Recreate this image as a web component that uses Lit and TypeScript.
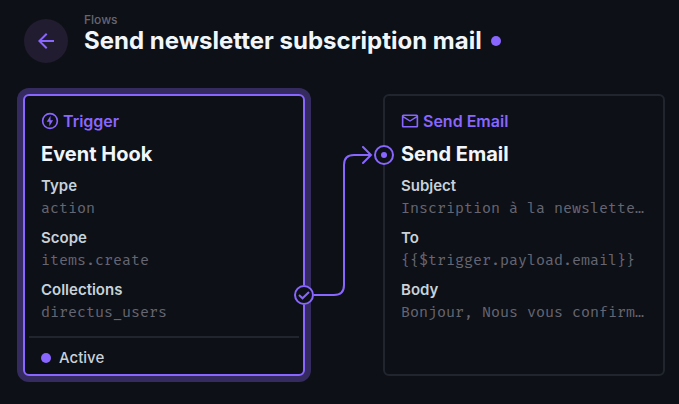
import { LitElement, html, css, svg, nothing } from "lit";
import { customElement, property } from "lit/decorators.js";
import { classMap } from "lit/directives/class-map.js";

interface Field {
  label: string;
  value: string;
}

const boltIcon = svg`
  <circle cx="12" cy="12" r="9" fill="none" stroke="currentColor" stroke-width="2" />
  <path d="M12.6 5.5 8 13h3.2v5.5L15.8 11h-3.2z" fill="currentColor" />`;

const mailIcon = svg`
  <path d="M22 6c0-1.1-.9-2-2-2H4c-1.1 0-2 .9-2 2v12c0 1.1.9 2 2 2h16c1.1 0 2-.9 2-2V6zm-2 0-8 5-8-5h16zm0 12H4V8l8 5 8-5v10z" fill="currentColor" />`;

@customElement("flow-panel")
export class FlowPanel extends LitElement {
  @property() kind = "";
  @property() name = "";
  @property({ attribute: false }) icon: unknown = nothing;
  @property({ attribute: false }) fields: Field[] = [];
  @property() status = "";
  @property({ type: Boolean }) trigger = false;

  static styles = css`
    :host {
      display: block;
      min-width: 0;
    }
    .panel {
      position: relative;
      box-sizing: border-box;
      height: 100%;
      min-height: 282px;
      display: flex;
      flex-direction: column;
      border: 2px solid #21262e;
      border-radius: 6px;
      background: #0d1017;
    }
    .selected {
      border-color: #8866ff;
      box-shadow: 0 0 0 6px #362b61;
    }
    .body {
      padding: 13px 16px 12px;
    }
    .kind {
      display: flex;
      align-items: center;
      gap: 4px;
      color: #8866ff;
      font-size: 16px;
      font-weight: 600;
      line-height: 24px;
    }
    h2 {
      margin: 8px 0;
      color: #f0f6fc;
      font-size: 20px;
      font-weight: 700;
      line-height: 26px;
    }
    dl {
      margin: 0;
      display: grid;
      grid-template-columns: minmax(0, 1fr);
      gap: 8px;
      font-size: 15px;
      line-height: 22px;
    }
    dt {
      color: #c9d1d9;
      font-weight: 600;
    }
    dd {
      margin: 0;
      overflow: hidden;
      text-overflow: ellipsis;
      white-space: nowrap;
      color: #666672;
      font-family: "Fira Mono", "Liberation Mono", monospace;
    }
    .footer {
      display: flex;
      align-items: center;
      gap: 8px;
      margin: auto 4px 0;
      padding: 4px 12px 0;
      border-top: 2px solid #21262e;
      color: #c9d1d9;
      font-size: 15px;
      font-weight: 500;
      line-height: 32px;
    }
    .dot {
      width: 10px;
      height: 10px;
      border-radius: 50%;
      background: #8866ff;
    }
    .port {
      position: absolute;
      width: 20px;
      height: 20px;
      padding: 0;
      border: 0;
      border-radius: 50%;
      background: #0d1117;
      color: #8866ff;
    }
    .port svg {
      display: block;
    }
    .in {
      left: -11px;
      top: 49px;
    }
    .out {
      right: -11px;
      top: 189px;
    }
  `;

  render() {
    return html`
      <article class=${classMap({ panel: true, selected: this.trigger })}>
        <div class="body">
          <div class="kind">
            <svg width="18" height="18" viewBox="1 1 22 22" aria-hidden="true">${this.icon}</svg>
            <span>${this.kind}</span>
          </div>
          <h2>${this.name}</h2>
          <dl>
            ${this.fields.map((f) => html`<div><dt>${f.label}</dt><dd>${f.value}</dd></div>`)}
          </dl>
        </div>
        ${this.status
          ? html`<div class="footer"><span class="dot"></span>${this.status}</div>`
          : nothing}
        ${this.trigger
          ? html`<button class="port out" aria-label="Success path">
              <svg width="20" height="20" viewBox="0 0 20 20" fill="none" stroke="currentColor" stroke-width="2">
                <circle cx="10" cy="10" r="9" />
                <path d="M5 10 8.5 13.3 15 7" />
              </svg>
            </button>`
          : html`<button class="port in" aria-label="Input">
              <svg width="20" height="20" viewBox="0 0 20 20" fill="none" stroke="currentColor" stroke-width="2">
                <circle cx="10" cy="10" r="9" />
                <circle cx="10" cy="10" r="3" fill="currentColor" stroke="none" />
              </svg>
            </button>`}
      </article>
    `;
  }
}

@customElement("app-root")
export class AppRoot extends LitElement {
  static styles = css`
    :host {
      display: block;
      min-height: 100vh;
      background: #0d1117;
      font-family: Inter, "Liberation Sans", sans-serif;
    }
    header {
      display: flex;
      align-items: flex-start;
      gap: 16px;
      padding: 12px 24px 24px;
    }
    .back {
      flex: none;
      display: grid;
      place-items: center;
      width: 44px;
      height: 44px;
      margin-top: 7px;
      padding: 0;
      border: 0;
      border-radius: 50%;
      background: #211c2f;
      color: #8866ff;
    }
    .crumb {
      display: block;
      color: #666672;
      font-size: 12px;
      font-weight: 500;
      line-height: 16px;
      text-decoration: none;
    }
    .title {
      display: flex;
      align-items: center;
      gap: 9px;
    }
    h1 {
      margin: 0;
      color: #f0f6fc;
      font-size: 24px;
      font-weight: 700;
      line-height: 26px;
    }
    .dot {
      width: 10px;
      height: 10px;
      border-radius: 50%;
      background: #8866ff;
    }
    .flow {
      display: grid;
      grid-template-columns: minmax(0, 1fr) 78px minmax(0, 1fr);
      padding: 7px 14px 28px 23px;
    }
    .wire {
      display: block;
      color: #8866ff;
    }
  `;

  private triggerFields: Field[] = [
    { label: "Type", value: "action" },
    { label: "Scope", value: "items.create" },
    { label: "Collections", value: "directus_users" },
  ];

  private mailFields: Field[] = [
    { label: "Subject", value: "Inscription à la newsletter confirmée" },
    { label: "To", value: "{{$trigger.payload.email}}" },
    { label: "Body", value: "Bonjour, Nous vous confirmons votre inscription" },
  ];

  render() {
    return html`
      <header>
        <button class="back" aria-label="Back">
          <svg width="24" height="24" viewBox="0 0 24 24" fill="currentColor" aria-hidden="true">
            <path d="M20 11H7.83l5.59-5.59L12 4l-8 8 8 8 1.41-1.41L7.83 13H20v-2z" />
          </svg>
        </button>
        <div>
          <a class="crumb" href="#flows">Flows</a>
          <div class="title">
            <h1>Send newsletter subscription mail</h1>
            <span class="dot"></span>
          </div>
        </div>
      </header>
      <main class="flow">
        <flow-panel
          trigger
          kind="Trigger"
          name="Event Hook"
          status="Active"
          .icon=${boltIcon}
          .fields=${this.triggerFields}
        ></flow-panel>
        <svg class="wire" width="78" height="282" viewBox="0 0 78 282" fill="none" stroke="currentColor" stroke-width="2" stroke-linecap="round" aria-hidden="true">
          <path d="M9 201H29Q39 201 39 191V71Q39 61 49 61H66M58 53l8 8-8 8" />
        </svg>
        <flow-panel
          kind="Send Email"
          name="Send Email"
          .icon=${mailIcon}
          .fields=${this.mailFields}
        ></flow-panel>
      </main>
    `;
  }
}
